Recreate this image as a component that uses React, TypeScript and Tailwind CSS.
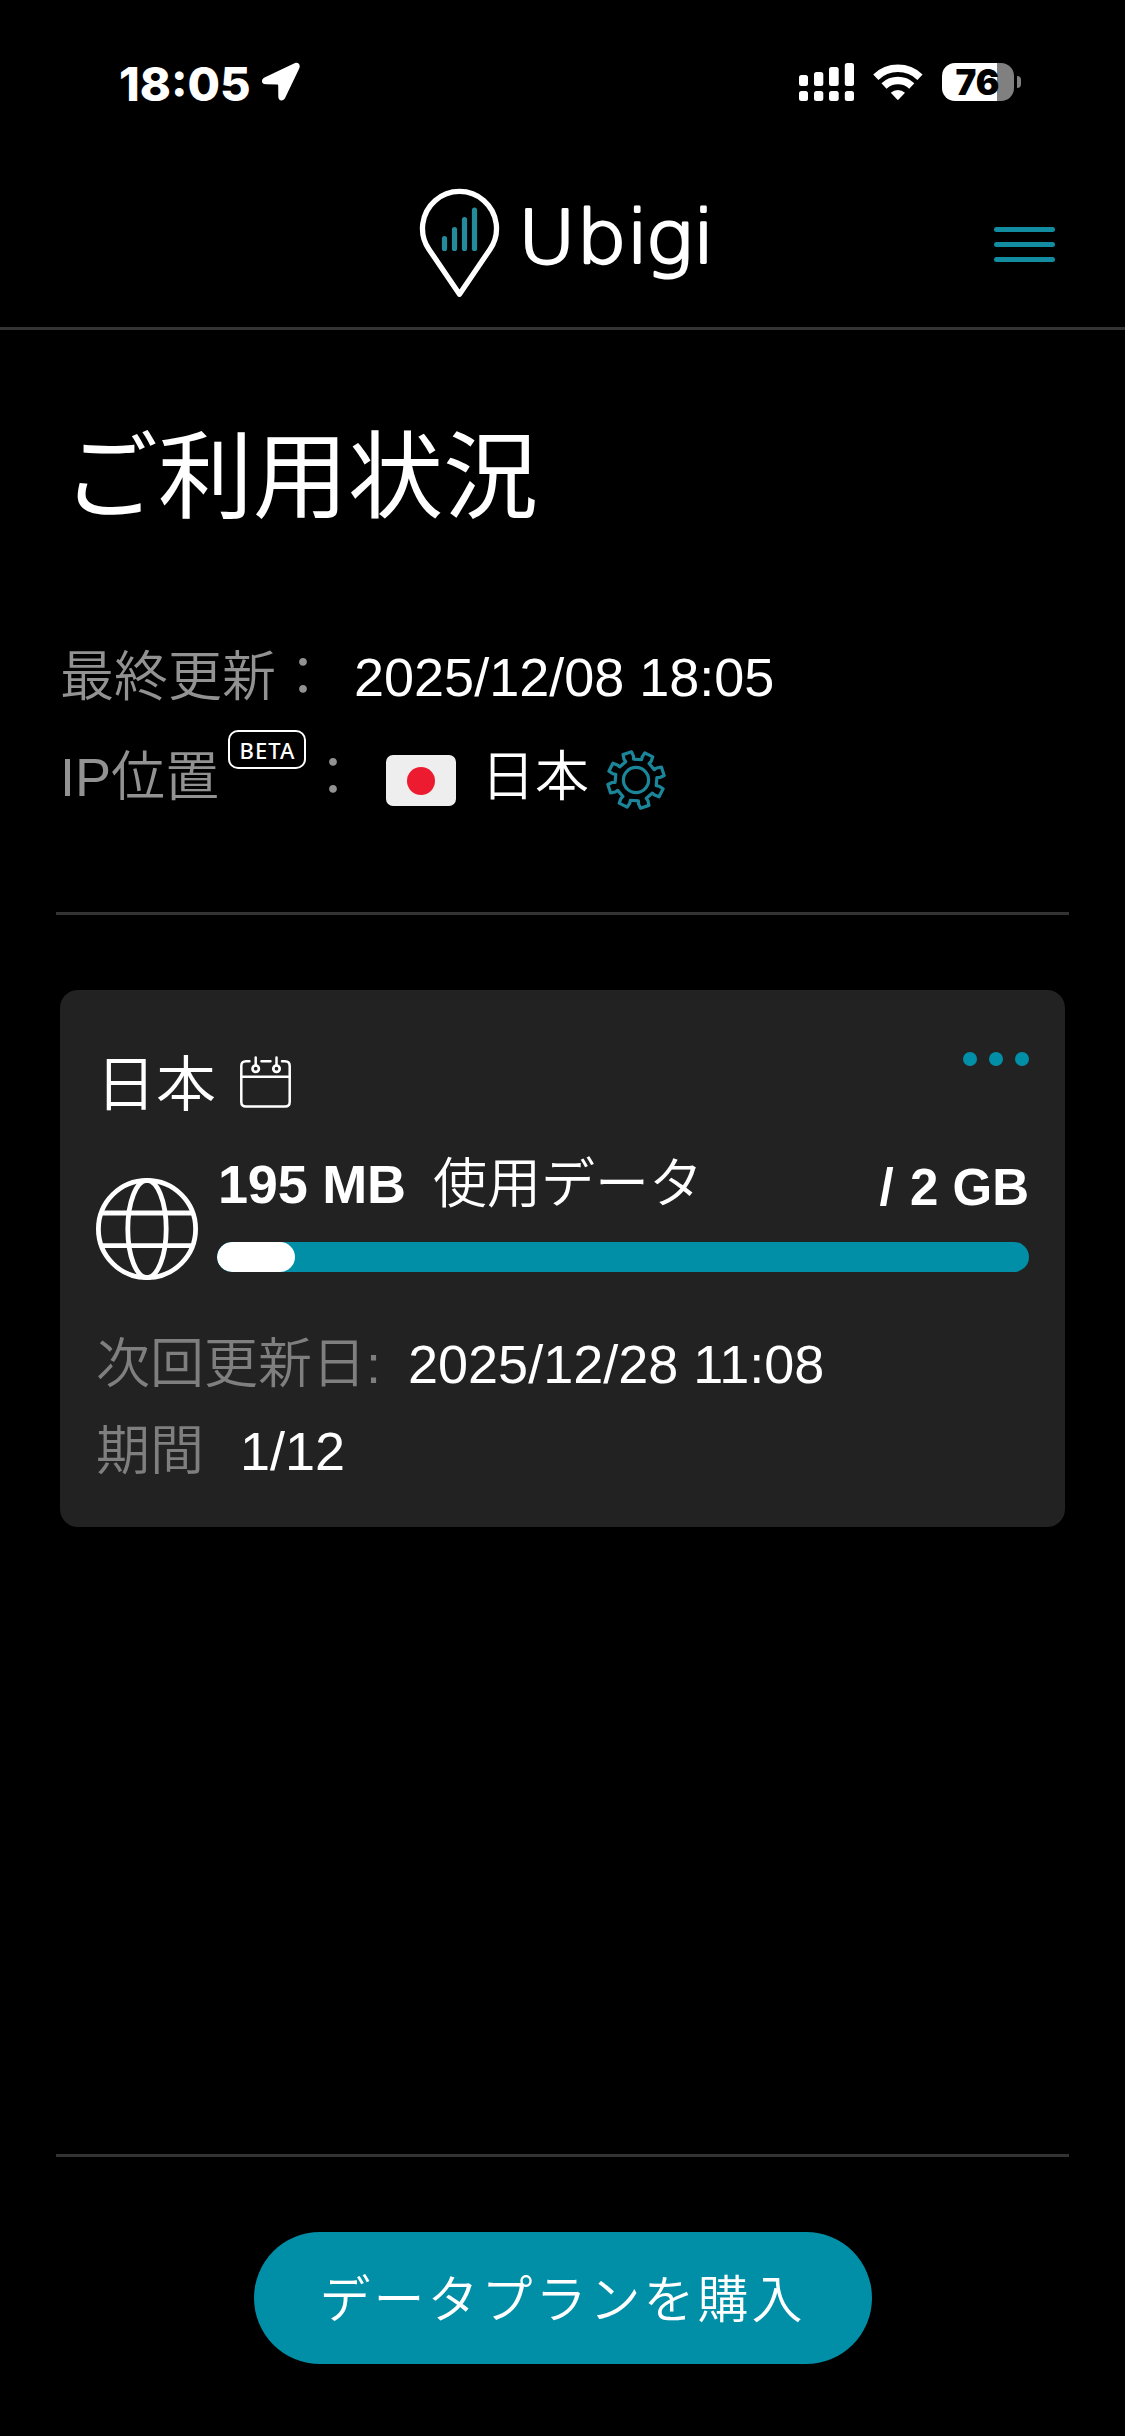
import type { ReactNode } from 'react';

function StatusBar() {
    return (
        <div className="flex h-[167px] shrink-0 items-center justify-between pr-[104px] pb-[3px] pl-[119px]">
            <div className="flex items-center gap-[10px]">
                <span className='pt-[2px] font-["Inter",sans-serif] text-[47px] leading-none font-extrabold'>18:05</span>
                <svg width="40" height="40" viewBox="262 64 40 40" fill="#fff">
                    <path d="M295.500 65.300 L266 79.300 C261.500 81.500 262.200 86.300 267 86.300 L278.200 86.500 Q279.200 86.500 279.200 87.500 L279.300 98.500 C279.300 103.300 284.300 103.800 286.200 99.800 L300.200 70.500 C302 66.500 299 63.600 295.500 65.300 Z" />
                </svg>
            </div>
            <div className="flex items-center gap-[19px]">
                <svg width="55" height="38" viewBox="799 63 55 38" fill="#fff">
                    <rect x="799" y="75" width="9" height="11" rx="2.500" />
                    <rect x="814" y="72" width="9.300" height="14" rx="2.500" />
                    <rect x="829" y="67" width="9.700" height="19" rx="2.500" />
                    <rect x="844.800" y="63" width="9.200" height="23" rx="2.500" />
                    <rect x="799" y="91" width="9" height="10" rx="2.500" />
                    <rect x="814" y="91" width="9.300" height="10" rx="2.500" />
                    <rect x="829" y="91" width="9.700" height="10" rx="2.500" />
                    <rect x="844.800" y="91" width="9.200" height="10" rx="2.500" />
                </svg>
                <svg width="50" height="38" viewBox="873 63 50 38" fill="none" stroke="#fff" strokeWidth="7.500">
                    <path d="M875.800 77.200 A32 32 0 0 1 920 77.200" />
                    <path d="M884 86 A20.500 20.500 0 0 1 911.800 86" />
                    <path d="M890.800 92.800 A10.500 10.500 0 0 1 905 92.800 L898.600 99.600 Q897.900 100.300 897.200 99.600 Z" fill="#fff" stroke="none" />
                </svg>
                <div className="flex items-center gap-[3px]">
                    <div className="flex h-[38px] w-[72px] items-center justify-center rounded-[13px] bg-[linear-gradient(90deg,#fff_55px,#808080_55px)]">
                        <span className='pr-[1px] font-["Inter",sans-serif] text-[35px] leading-none font-black text-black'>76</span>
                    </div>
                    <div className="h-[12px] w-[4px] rounded-r-full bg-[#808080]" />
                </div>
            </div>
        </div>
    );
}

function Logo() {
    return (
        <svg width="286" height="120" viewBox="420 187 286 120" fill="none" strokeLinecap="round" strokeLinejoin="round" className="overflow-visible">
            <path d="M459.500 294.300 L428.900 249.200 A37 37 0 1 1 490.100 249.200 Z" stroke="#fff" strokeWidth="5.300" />
            <path d="M444.500 238.500 V248.500 M454.500 229.500 V248.500 M464.500 219.500 V248.500 M474.500 210.200 V248.500" stroke="#238b9b" strokeWidth="5.200" />
            {/* slightly widened so the bowls come out round */}
            <text transform="scale(1.08 1)" x="479.400 533.600 580 597.700 641.400" y="263.500" fontSize="73.500" fill="#fff" stroke="#fff" strokeWidth="2.800" className='font-["DejaVu_Sans",sans-serif] font-extralight'>Ubigi</text>
        </svg>
    );
}

function Header() {
    return (
        <header className="grid h-[163px] shrink-0 grid-cols-[1fr_auto_1fr] items-center border-b-[3px] border-[#333]">
            <div />
            <Logo />
            <button className="mr-[70px] mb-[5px] flex flex-col gap-[10px] justify-self-end">
                <span className="h-[5px] w-[61px] rounded-full bg-[#118ca1]" />
                <span className="h-[5px] w-[61px] rounded-full bg-[#118ca1]" />
                <span className="h-[5px] w-[61px] rounded-full bg-[#118ca1]" />
            </button>
        </header>
    );
}

const polar = (r: number, deg: number) => {
    const a = (deg * Math.PI) / 180;
    return `${(30 + r * Math.cos(a)).toFixed(2)} ${(30 - r * Math.sin(a)).toFixed(2)}`;
};

// eight teeth, the whole wheel turned by 18 degrees
const gearPoints = Array.from({ length: 8 }, (_, i) => {
    const a = 18 + i * 45;
    return [polar(21, a - 11.5), polar(24, a - 12), polar(28.5, a - 9), polar(28.5, a + 9), polar(24, a + 12), polar(21, a + 11.5)].join(' ');
}).join(' ');

function GearIcon() {
    return (
        <svg width="60" height="60" viewBox="0 0 60 60" fill="none" stroke="#1b8699" strokeWidth="3.200" strokeLinejoin="round">
            <polygon points={gearPoints} />
            <circle cx="30" cy="30" r="12.600" />
        </svg>
    );
}

function CalendarIcon() {
    return (
        <svg width="51" height="52" viewBox="0 0 51 52" fill="none" stroke="#fff" strokeWidth="2.500" strokeLinecap="round">
            <path d="M9.500 5.300 H6 Q1.300 5.300 1.300 10 V46 Q1.300 50.500 6 50.500 H45 Q49.700 50.500 49.700 46 V10 Q49.700 5.300 45 5.300 H42" />
            <path d="M21.500 5.300 H30.500 M1.300 20.700 H49.700 M15.700 1.500 V9 M36.500 1.500 V9" />
            <circle cx="15.700" cy="12.700" r="3.200" strokeWidth="2.700" />
            <circle cx="36.500" cy="12.700" r="3.200" strokeWidth="2.700" />
        </svg>
    );
}

function GlobeIcon() {
    return (
        <svg width="102" height="102" viewBox="0 0 102 102" fill="none" stroke="#fff" strokeWidth="4.800">
            <circle cx="51" cy="51" r="48.600" />
            <ellipse cx="51" cy="51" rx="19.200" ry="48.600" />
            <path d="M5 35 H97 M5 67.700 H97" />
        </svg>
    );
}

function DetailRow({ label, children }: { label: string; children: ReactNode }) {
    return (
        <div className="flex h-[87px] items-center leading-[54px]">
            <span className="font-[350] text-[#7f7f7f]">{label}</span>
            {children}
        </div>
    );
}

function PlanCard({ usedMb, totalGb }: { usedMb: number; totalGb: number }) {
    return (
        <section className="mx-[60px] mt-[75px] h-[537px] rounded-[18px] bg-[#222] px-[36px] pt-[48px] text-[54px]">
            <div className="flex h-[96px] items-center">
                <h2 className="text-[60px] leading-[60px] font-[350]">日本</h2>
                <div className="mb-[9px] ml-[24px]"><CalendarIcon /></div>
                <button className="mt-[14px] ml-auto flex gap-[12px] self-start">
                    <span className="size-[14px] rounded-full bg-[#008fa7]" />
                    <span className="size-[14px] rounded-full bg-[#008fa7]" />
                    <span className="size-[14px] rounded-full bg-[#008fa7]" />
                </button>
            </div>
            <div className="mt-[20px] flex">
                <div className="mt-[24px]"><GlobeIcon /></div>
                <div className="ml-[19px] flex-1">
                    <div className="flex h-[60px] items-center leading-[60px]">
                        <span className="ml-[1px] font-bold tracking-[-0.2px]">{usedMb} MB</span>
                        <span className="ml-[27px] font-[350]">使用データ</span>
                        <span className="mt-[8px] ml-auto text-[51px] font-bold"><span className="mr-[2px]">/</span> {totalGb} GB</span>
                    </div>
                    <div className="mt-[28px] h-[30px] overflow-hidden rounded-full bg-[#008fa7]">
                        <div className="h-full rounded-full bg-white" style={{ width: `${(usedMb / (totalGb * 1024)) * 100 + 0.1}%` }} />
                    </div>
                </div>
            </div>
            <div className="mt-[40px]">
                <DetailRow label="次回更新日:"><span className="ml-[27px]">2025/12/28 11:08</span></DetailRow>
                <DetailRow label="期間"><span className="ml-[36px]">1/12</span></DetailRow>
            </div>
        </section>
    );
}

export default function App() {
    return (
        <div className='flex h-[2436px] w-[1125px] flex-col bg-black font-["Liberation_Sans","Noto_Sans_CJK_JP",sans-serif] text-white' lang="ja">
            <StatusBar />
            <Header />
            <main className="flex-1">
                <h1 className="mt-[100px] ml-[63px] text-[95px] leading-[96px] font-normal">ご利用状況</h1>
                <div className="mt-[101px] ml-[60px] text-[54px] leading-[54px]">
                    <div className="flex h-[100px] items-center">
                        <span className="font-[350] text-[#929292]">最終更新：</span>
                        <span className="ml-[24px]">2025/12/08 18:05</span>
                    </div>
                    <div className="flex h-[100px] items-center">
                        <span className="font-[350] text-[#929292]">IP位置</span>
                        <span className='mt-[3px] ml-[9px] flex h-[39px] w-[78px] items-center justify-center self-start rounded-[10px] border-[2.5px] border-white pl-[1px] font-["Noto_Sans",sans-serif] text-[22px] leading-none font-medium tracking-[1px]'>BETA</span>
                        <span className="font-[350] text-[#929292]">：</span>
                        <div className="mt-[7px] ml-[26px] flex h-[51px] w-[70px] items-center justify-center rounded-[7px] bg-[#eee]">
                            <div className="size-[28px] rounded-full bg-[#ed1b2f]" />
                        </div>
                        <span className="ml-[25px] font-[350]">日本</span>
                        <div className="mt-[6px] ml-[17px]"><GearIcon /></div>
                    </div>
                </div>
                <hr className="mx-[56px] mt-[85px] border-t-[3px] border-[#333]" />
                <PlanCard usedMb={195} totalGb={2} />
            </main>
            <footer className="mx-[56px] flex h-[282px] shrink-0 justify-center border-t-[3px] border-[#333] pt-[75px]">
                <button className="flex h-[132px] w-[618px] items-center justify-center rounded-full bg-[#008fa7] pt-[5px] text-[51px] leading-[54px] font-[350] tracking-[3px]">データプランを購入</button>
            </footer>
        </div>
    );
}
